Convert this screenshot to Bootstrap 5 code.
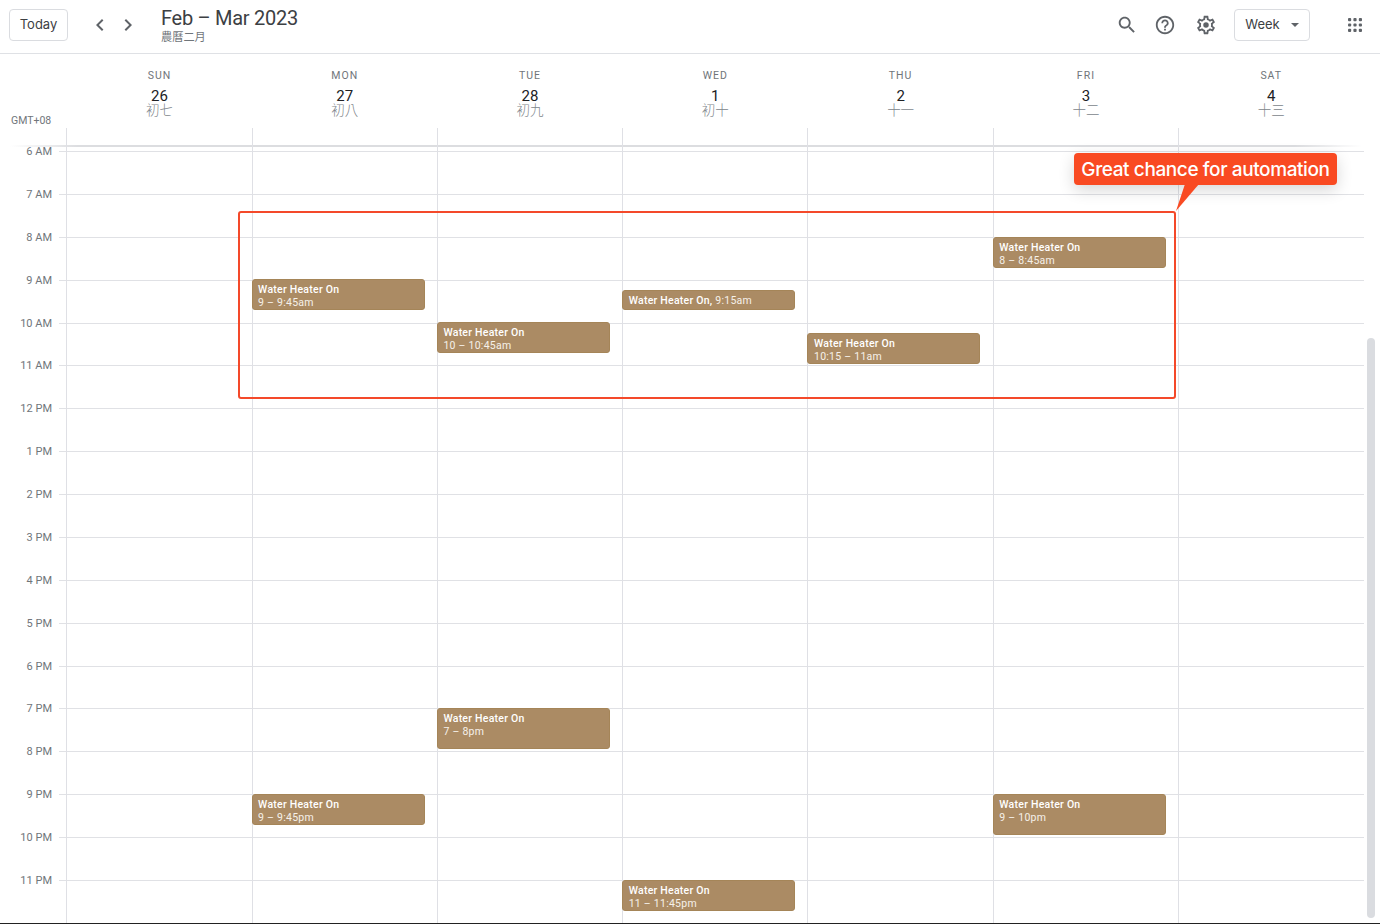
<!DOCTYPE html>
<html lang="zh-Hant">
  <head>
    <meta charset="UTF-8" />
    <meta name="viewport" content="width=device-width, initial-scale=1.0" />
    <title>Calendar - Week</title>
    <link href="https://cdn.jsdelivr.net/npm/bootstrap@5.3.0/dist/css/bootstrap.min.css" rel="stylesheet" />
    <style>
      html, body { height: 100%; }
      body {
        overflow: hidden;
        background: #fff;
        color: #3c4043;
        font-family: Roboto, "Noto Sans CJK TC", sans-serif;
      }
      .page { position: relative; width: 1380px; height: 924px; overflow: hidden; border-bottom: 1px solid #222; }

      /* top bar */
      .topbar { height: 54px; border-bottom: 1px solid #dfe1e5; padding: 0 0 3px 9px; }
      .bar-btn {
        height: 32px;
        font-family: Inter, sans-serif;
        font-size: 13px;
        font-weight: 400;
        color: #3c4043;
        background: #fff;
        border: 1px solid #dadce0;
        border-radius: 4px;
        padding: 0;
      }
      .btn-today { width: 59px; }
      .btn-week { width: 76px; margin-left: 8px; gap: 11px; }
      .nav-arrows { margin-left: 20px; width: 56px; gap: 4px; }
      .title-block { margin-left: 17px; line-height: 1; }
      .cal-title { font-size: 20px; color: #3c4043; line-height: 24px; letter-spacing: -.28px; }
      .cal-sub { font-size: 11.2px; color: #70757a; line-height: 13px; margin-top: 1px; }
      .ico { display: block; fill: #5f6368; flex: none; }
      .ico-slot { height: 32px; width: 40px; }
      .slot-search { width: 34px; }
      .slot-help { width: 42px; }
      .actions { margin-right: 17px; }
      .apps-slot { margin-left: 37px; }

      /* day header */
      .dayhead { height: 74px; }
      .gmt-cell { width: 66.8px; height: 75px; font-size: 10.5px; color: #70757a; padding-left: 11px; }
      .day-cell { width: 185.3px; text-align: center; padding-top: 15px; }
      .day-name { font-size: 10.5px; font-weight: 400; letter-spacing: 1px; color: #70757a; line-height: 13px; }
      .day-num { font-size: 15px; font-weight: 400; color: #202124; line-height: 14px; margin-top: 7px; }
      .day-lunar { font-size: 13.5px; color: #80868b; line-height: 14px; margin-top: -1px; font-family: "Noto Sans CJK TC", sans-serif; font-weight: 300; }

      /* time grid */
      .timegrid { position: relative; height: 795px; padding-top: 23.1px; }
      .hour-row { height: 42.88px; }
      .hour-label { width: 52px; text-align: right; font-size: 11px; color: #70757a; line-height: 13px; margin-top: -6px; }
      .hour-line { width: 1305px; margin-left: 7px; border-top: 1px solid #e0e1e5; }
      .day-cols { position: absolute; top: 0; bottom: 0; left: 66.3px; width: 1297.1px; }
      .day-col { position: relative; width: 185.3px; border-left: 1px solid #dfe0e5; }
      .head-shade {
        position: absolute; top: 17px; left: 10px; width: 1352px; height: 2px;
        background: linear-gradient(to right, transparent, #dcdde0 5%, #dcdde0 95%, transparent);
      }
      .evt {
        position: absolute;
        left: -1px;
        width: 173px;
        background: #ab8b64;
        border: 1px solid #a58558;
        border-radius: 3px;
        color: #fff;
        font-size: 10.5px;
        line-height: 13px;
        padding: 2.5px 5.5px;
        letter-spacing: .25px;
        overflow: hidden;
        white-space: nowrap;
      }
      .evt-name { font-weight: 500; }
      .evt-time { color: #f6f1ea; }

      .scroll-thumb {
        position: absolute; left: 1367px; top: 338px; width: 8px; height: 580px;
        background: #dadce0; border-radius: 4px;
      }

      /* annotation */
      .note-box {
        position: absolute; left: 238px; top: 211px; width: 938px; height: 188px;
        border: 2px solid #f4492a; border-radius: 3px;
      }
      .note-bubble {
        position: absolute; left: 1074px; top: 153px; width: 263px; height: 32px;
        background: #f94a22; border-radius: 4px; color: #fff;
        font-family: Inter, sans-serif; font-size: 19px; font-weight: 500; line-height: 33px;
        letter-spacing: -.4px; text-align: center; white-space: nowrap;
        box-shadow: 0 5px 16px rgba(0, 0, 0, .16);
      }
      .note-tail { position: absolute; left: 1175px; top: 184px; fill: #f94a22; }
    </style>
  </head>
  <body>
    <div class="page">
      <header class="topbar d-flex align-items-center">
        <button class="bar-btn btn-today" type="button">Today</button>
        <div class="nav-arrows d-flex align-items-center">
          <svg class="ico" width="24" height="24" viewBox="0 0 24 24"><path d="M15.41 7.41 14 6l-6 6 6 6 1.41-1.41L10.83 12z" /></svg>
          <svg class="ico" width="24" height="24" viewBox="0 0 24 24"><path d="M8.59 16.59 10 18l6-6-6-6-1.41 1.41L13.17 12z" /></svg>
        </div>
        <div class="title-block">
          <div class="cal-title">Feb – Mar 2023</div>
          <div class="cal-sub">農曆二月</div>
        </div>
        <div class="actions ms-auto d-flex align-items-center">
          <div class="ico-slot slot-search d-flex align-items-center justify-content-center">
            <svg class="ico" width="22" height="22" viewBox="0 0 24 24"><path d="M15.5 14h-.79l-.28-.27C15.41 12.59 16 11.11 16 9.5 16 5.91 13.09 3 9.5 3S3 5.91 3 9.5 5.91 16 9.5 16c1.61 0 3.09-.59 4.23-1.57l.27.28v.79l5 4.99L20.49 19l-4.99-5zm-6 0C7.01 14 5 11.99 5 9.5S7.01 5 9.5 5 14 7.01 14 9.5 11.99 14 9.5 14z" /></svg>
          </div>
          <div class="ico-slot slot-help d-flex align-items-center justify-content-center">
            <svg class="ico" width="22" height="22" viewBox="0 0 24 24"><path d="M11 18h2v-2h-2v2zm1-16C6.48 2 2 6.48 2 12s4.48 10 10 10 10-4.48 10-10S17.52 2 12 2zm0 18c-4.41 0-8-3.59-8-8s3.59-8 8-8 8 3.59 8 8-3.59 8-8 8zm0-14c-2.21 0-4 1.79-4 4h2c0-1.1.9-2 2-2s2 .9 2 2c0 2-3 1.75-3 5h2c0-2.25 3-2.5 3-5 0-2.21-1.79-4-4-4z" /></svg>
          </div>
          <div class="ico-slot d-flex align-items-center justify-content-center">
            <svg class="ico" width="22" height="22" viewBox="0 0 24 24"><path d="M19.43 12.98c.04-.32.07-.64.07-.98 0-.34-.03-.66-.07-.98l2.11-1.65c.19-.15.24-.42.12-.64l-2-3.46c-.09-.16-.26-.25-.44-.25-.06 0-.12.01-.17.03l-2.49 1c-.52-.4-1.08-.73-1.69-.98l-.38-2.65C14.46 2.18 14.25 2 14 2h-4c-.25 0-.46.18-.49.42l-.38 2.65c-.61.25-1.17.59-1.69.98l-2.49-1c-.06-.02-.12-.03-.18-.03-.17 0-.34.09-.43.25l-2 3.46c-.13.22-.07.49.12.64l2.11 1.65c-.04.32-.07.65-.07.98 0 .33.03.66.07.98l-2.11 1.65c-.19.15-.24.42-.12.64l2 3.46c.09.16.26.25.44.25.06 0 .12-.01.17-.03l2.49-1c.52.4 1.08.73 1.69.98l.38 2.65c.03.24.24.42.49.42h4c.25 0 .46-.18.49-.42l.38-2.65c.61-.25 1.17-.59 1.69-.98l2.49 1c.06.02.12.03.18.03.17 0 .34-.09.43-.25l2-3.46c.12-.22.07-.49-.12-.64l-2.11-1.65zm-1.98-1.71c.04.31.05.52.05.73 0 .21-.02.43-.05.73l-.14 1.13.89.7 1.08.84-.7 1.21-1.27-.51-1.04-.42-.9.68c-.43.32-.84.56-1.25.73l-1.06.43-.16 1.13-.2 1.35h-1.4l-.19-1.35-.16-1.13-1.06-.43c-.43-.18-.83-.41-1.23-.71l-.91-.7-1.06.43-1.27.51-.7-1.21 1.08-.84.89-.7-.14-1.13c-.03-.31-.05-.54-.05-.74s.02-.43.05-.73l.14-1.13-.89-.7-1.08-.84.7-1.21 1.27.51 1.04.42.9-.68c.43-.32.84-.56 1.25-.73l1.06-.43.16-1.13.2-1.35h1.39l.19 1.35.16 1.13 1.06.43c.43.18.83.41 1.23.71l.91.7 1.06-.43 1.27-.51.7 1.21-1.07.85-.89.7.14 1.13zM12 9a3 3 0 1 0 0 6 3 3 0 0 0 0-6z" /></svg>
          </div>
          <button class="bar-btn btn-week d-flex align-items-center justify-content-center" type="button">
            Week
            <svg width="8" height="4" viewBox="0 0 8 4" fill="#5f6368"><path d="M0 0h8L4 4z" /></svg>
          </button>
          <div class="apps-slot">
            <svg class="ico" width="16" height="16" viewBox="0 0 16 16">
              <rect x="1" y="1" width="3.2" height="3.2" rx="1" /><rect x="6.4" y="1" width="3.2" height="3.2" rx="1" /><rect x="11.8" y="1" width="3.2" height="3.2" rx="1" />
              <rect x="1" y="6.4" width="3.2" height="3.2" rx="1" /><rect x="6.4" y="6.4" width="3.2" height="3.2" rx="1" /><rect x="11.8" y="6.4" width="3.2" height="3.2" rx="1" />
              <rect x="1" y="11.8" width="3.2" height="3.2" rx="1" /><rect x="6.4" y="11.8" width="3.2" height="3.2" rx="1" /><rect x="11.8" y="11.8" width="3.2" height="3.2" rx="1" />
            </svg>
          </div>
        </div>
      </header>

      <div class="dayhead d-flex">
        <div class="gmt-cell d-flex align-items-end">GMT+08</div>
        <div class="day-cell"><div class="day-name">SUN</div><div class="day-num">26</div><div class="day-lunar">初七</div></div>
        <div class="day-cell"><div class="day-name">MON</div><div class="day-num">27</div><div class="day-lunar">初八</div></div>
        <div class="day-cell"><div class="day-name">TUE</div><div class="day-num">28</div><div class="day-lunar">初九</div></div>
        <div class="day-cell"><div class="day-name">WED</div><div class="day-num">1</div><div class="day-lunar">初十</div></div>
        <div class="day-cell"><div class="day-name">THU</div><div class="day-num">2</div><div class="day-lunar">十一</div></div>
        <div class="day-cell"><div class="day-name">FRI</div><div class="day-num">3</div><div class="day-lunar">十二</div></div>
        <div class="day-cell"><div class="day-name">SAT</div><div class="day-num">4</div><div class="day-lunar">十三</div></div>
      </div>

      <main class="timegrid">
        <div class="hour-row d-flex"><div class="hour-label">6 AM</div><div class="hour-line"></div></div>
        <div class="hour-row d-flex"><div class="hour-label">7 AM</div><div class="hour-line"></div></div>
        <div class="hour-row d-flex"><div class="hour-label">8 AM</div><div class="hour-line"></div></div>
        <div class="hour-row d-flex"><div class="hour-label">9 AM</div><div class="hour-line"></div></div>
        <div class="hour-row d-flex"><div class="hour-label">10 AM</div><div class="hour-line"></div></div>
        <div class="hour-row d-flex"><div class="hour-label">11 AM</div><div class="hour-line"></div></div>
        <div class="hour-row d-flex"><div class="hour-label">12 PM</div><div class="hour-line"></div></div>
        <div class="hour-row d-flex"><div class="hour-label">1 PM</div><div class="hour-line"></div></div>
        <div class="hour-row d-flex"><div class="hour-label">2 PM</div><div class="hour-line"></div></div>
        <div class="hour-row d-flex"><div class="hour-label">3 PM</div><div class="hour-line"></div></div>
        <div class="hour-row d-flex"><div class="hour-label">4 PM</div><div class="hour-line"></div></div>
        <div class="hour-row d-flex"><div class="hour-label">5 PM</div><div class="hour-line"></div></div>
        <div class="hour-row d-flex"><div class="hour-label">6 PM</div><div class="hour-line"></div></div>
        <div class="hour-row d-flex"><div class="hour-label">7 PM</div><div class="hour-line"></div></div>
        <div class="hour-row d-flex"><div class="hour-label">8 PM</div><div class="hour-line"></div></div>
        <div class="hour-row d-flex"><div class="hour-label">9 PM</div><div class="hour-line"></div></div>
        <div class="hour-row d-flex"><div class="hour-label">10 PM</div><div class="hour-line"></div></div>
        <div class="hour-row d-flex"><div class="hour-label">11 PM</div><div class="hour-line"></div></div>

        <div class="head-shade"></div>

        <div class="day-cols d-flex">
          <div class="day-col"></div>
          <div class="day-col">
            <div class="evt" style="top: 151px; height: 31px"><div class="evt-name">Water Heater On</div><div class="evt-time">9 – 9:45am</div></div>
            <div class="evt" style="top: 666px; height: 31px"><div class="evt-name">Water Heater On</div><div class="evt-time">9 – 9:45pm</div></div>
          </div>
          <div class="day-col">
            <div class="evt" style="top: 194px; height: 31px"><div class="evt-name">Water Heater On</div><div class="evt-time">10 – 10:45am</div></div>
            <div class="evt" style="top: 580px; height: 41px"><div class="evt-name">Water Heater On</div><div class="evt-time">7 – 8pm</div></div>
          </div>
          <div class="day-col">
            <div class="evt" style="top: 162px; height: 20px"><span class="evt-name">Water Heater On,</span> <span class="evt-time">9:15am</span></div>
            <div class="evt" style="top: 752px; height: 31px"><div class="evt-name">Water Heater On</div><div class="evt-time">11 – 11:45pm</div></div>
          </div>
          <div class="day-col">
            <div class="evt" style="top: 205px; height: 31px"><div class="evt-name">Water Heater On</div><div class="evt-time">10:15 – 11am</div></div>
          </div>
          <div class="day-col">
            <div class="evt" style="top: 109px; height: 31px"><div class="evt-name">Water Heater On</div><div class="evt-time">8 – 8:45am</div></div>
            <div class="evt" style="top: 666px; height: 41px"><div class="evt-name">Water Heater On</div><div class="evt-time">9 – 10pm</div></div>
          </div>
          <div class="day-col"></div>
        </div>
      </main>

      <div class="scroll-thumb"></div>

      <div class="note-box"></div>
      <div class="note-bubble">Great chance for automation</div>
      <svg class="note-tail" width="26" height="28" viewBox="0 0 26 28"><polygon points="10,0 24,0 1,27" /></svg>
    </div>

    <script src="https://cdn.jsdelivr.net/npm/bootstrap@5.3.0/dist/js/bootstrap.bundle.min.js"></script>
  </body>
</html>
